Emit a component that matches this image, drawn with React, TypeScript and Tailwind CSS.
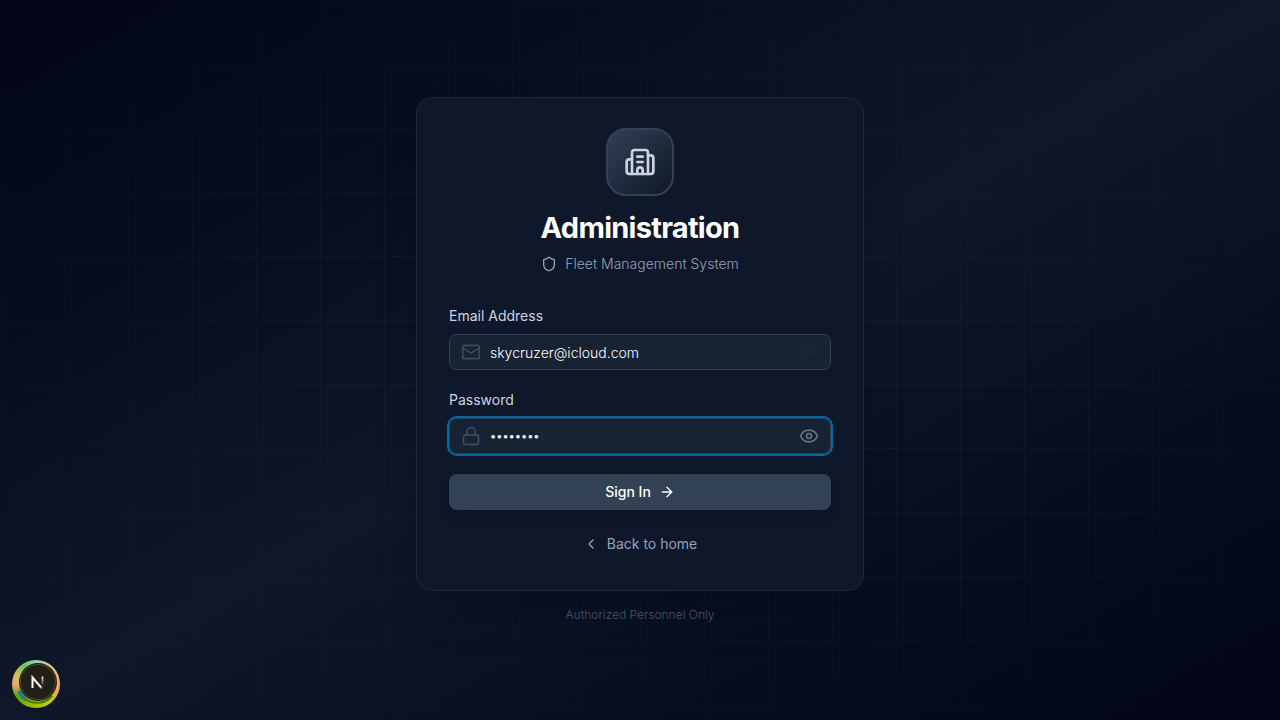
import { useState } from 'react';
import {
  ArrowRight,
  Building2,
  ChevronLeft,
  Eye,
  Lock,
  Mail,
  Shield,
} from 'lucide-react';

const fieldClass =
  'block h-9 w-full rounded-lg border border-[#334155] bg-[#172232] pr-10 pl-10 text-white';

function DevBadge() {
  return (
    <button
      type="button"
      aria-label="Open developer tools"
      className="fixed bottom-3 left-3 size-12 rounded-full bg-[conic-gradient(from_0deg,#8fd6b4,#f0c878_12%,#f2a878_25%,#e0b040_34%,#b8cc10_42%,#8cb80c_56%,#5f9c10_66%,#e8a868_74%,#d8c060_82%,#74c060_90%,#8fd6b4)]"
    >
      <svg viewBox="0 0 48 48" className="size-full" fill="none" aria-hidden="true">
        <defs>
          <linearGradient id="badge-diagonal" x1="25" y1="22" x2="31" y2="29" gradientUnits="userSpaceOnUse">
            <stop stopColor="#fff" />
            <stop offset="0.6" stopColor="#fff" />
            <stop offset="1" stopColor="#fff" stopOpacity="0" />
          </linearGradient>
          <linearGradient id="badge-stem" x1="30" y1="16" x2="30" y2="26" gradientUnits="userSpaceOnUse">
            <stop stopColor="#fff" />
            <stop offset="1" stopColor="#fff" stopOpacity="0" />
          </linearGradient>
        </defs>
        <path d="M7 31A19 19 0 0 0 14 40" stroke="#087f9c" strokeWidth="3" />
        <path d="M12 38A20 20 0 0 0 40 36" stroke="#477c0b" strokeWidth="2" />
        <circle cx="26" cy="22" r="19" fill="#222016" />
        <circle cx="26" cy="22" r="17.5" stroke="#4a4838" strokeWidth="1" />
        <path d="M20.500 28V17.500L30 28.500" stroke="url(#badge-diagonal)" strokeWidth="2" />
        <path d="M30.500 16.500V26" stroke="url(#badge-stem)" strokeWidth="1.800" />
      </svg>
    </button>
  );
}

export default function App() {
  const [email, setEmail] = useState('skycruzer@icloud.com');
  const [password, setPassword] = useState('password');
  const [visible, setVisible] = useState(false);

  return (
    <main className="relative isolate flex min-h-screen flex-col items-center justify-center bg-linear-to-br from-[#020617] via-[#0f172a] to-[#020617] px-4 font-[Inter,sans-serif]">
      <div
        aria-hidden="true"
        className="absolute inset-0 -z-10 bg-[linear-gradient(to_right,#1e293b_1px,transparent_1px),linear-gradient(to_bottom,#1e293b_1px,transparent_1px)] mask-[radial-gradient(ellipse_at_center,black_30%,transparent_100%)] bg-size-[64px_64px] opacity-35"
      />
      <section className="w-full max-w-md rounded-2xl border border-[#1e293b] bg-[#0f172a] px-8 pt-[30px] pb-9 shadow-2xl">
        <header className="flex flex-col items-center">
          <div className="rounded-[20px] border-2 border-[#334155] bg-linear-to-br from-[#334155] to-[#0f172a] p-4 text-[#cbd5e1]">
            <Building2 className="size-8" />
          </div>
          <h1 className="mt-3.5 text-[29px] leading-9 font-bold tracking-tight text-white">
            Administration
          </h1>
          <p className="mt-2 flex items-center gap-2 text-sm font-light text-[#94a3b8]">
            <Shield className="size-4" />
            Fleet Management System
          </p>
        </header>

        <form className="mt-8 flex flex-col gap-5" onSubmit={(e) => e.preventDefault()}>
          <div className="flex flex-col gap-2">
            <label htmlFor="email" className="text-sm text-[#cbd5e1]">
              Email Address
            </label>
            <div className="relative">
              <Mail className="absolute top-2 left-3 size-5 text-[#3d4b5e]" strokeWidth={2} />
              <input
                id="email"
                type="email"
                value={email}
                onChange={(e) => setEmail(e.target.value)}
                className={`${fieldClass} text-sm font-light`}
              />
              <svg
                viewBox="0 0 12 12"
                className="absolute top-3 right-4 size-3 text-[#12333b]"
                fill="none"
                stroke="currentColor"
                aria-hidden="true"
              >
                <circle cx="6" cy="6" r="4.200" strokeWidth="1.600" />
                <path d="M4.500 6.200L5.500 6.800L7.500 5.400" strokeWidth="1.200" />
              </svg>
            </div>
          </div>

          <div className="flex flex-col gap-2">
            <label htmlFor="password" className="text-sm text-[#cbd5e1]">
              Password
            </label>
            <div className="relative rounded-lg ring-2 ring-[#0369a1]">
              <Lock className="absolute top-2 left-3 size-5 text-[#3d4b5e]" strokeWidth={2} />
              <input
                id="password"
                type={visible ? 'text' : 'password'}
                value={password}
                onChange={(e) => setPassword(e.target.value)}
                className={`${fieldClass} text-[11px] outline-none`}
              />
              <button
                type="button"
                aria-label="Show password"
                onClick={() => setVisible(!visible)}
                className="absolute top-2 right-3 text-[#64748b]"
              >
                <Eye className="size-5" strokeWidth={2} />
              </button>
            </div>
          </div>

          <button
            type="submit"
            className="flex h-9 items-center justify-center gap-2 rounded-lg bg-[#334155] text-sm font-medium text-white shadow-lg"
          >
            Sign In
            <ArrowRight className="size-4" />
          </button>
        </form>

        <div className="mt-6 flex justify-center">
          <a href="#home" className="flex items-center gap-2 text-sm text-[#94a3b8]">
            <ChevronLeft className="size-4" />
            Back to home
          </a>
        </div>
      </section>
      <p className="mt-4 text-xs font-light text-[#475569]">Authorized Personnel Only</p>
      <DevBadge />
    </main>
  );
}
